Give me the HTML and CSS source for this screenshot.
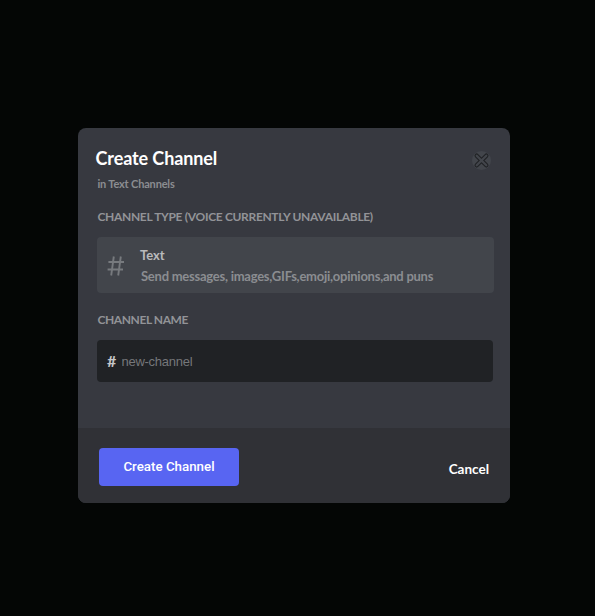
FILE: index.html
```html
<!DOCTYPE html>
<html lang="en">
<head>
<meta charset="utf-8">
<title>Create Channel</title>
<link rel="stylesheet" href="styles.css">
</head>
<body>
<main class="modal">
  <div class="content">
    <header class="header">
      <div>
        <h1 class="title">Create Channel</h1>
        <p class="subtitle">in Text Channels</p>
      </div>
      <button class="close" aria-label="Close">
        <svg width="19" height="19" viewBox="0 0 19 19" fill="none" stroke-linecap="round">
          <path d="M4.7 4.7 14.3 14.3M14.3 4.7 4.7 14.3" stroke="#202225" stroke-width="4.4"/>
          <path d="M4.7 4.7 14.3 14.3M14.3 4.7 4.7 14.3" stroke="#42454b" stroke-width="2.2"/>
        </svg>
      </button>
    </header>
    <h2 class="label type-label">CHANNEL TYPE (VOICE CURRENTLY UNAVAILABLE)</h2>
    <section class="option">
      <svg class="hash" width="18" height="20" viewBox="0 0 18 20" fill="none" stroke="#777a7e" stroke-width="1.9">
        <path d="M6.8.5 4.2 19.5M13.8.5 11.2 19.5M1.4 6H17M.6 13.5H16"/>
      </svg>
      <div>
        <h3 class="option-title">Text</h3>
        <p class="option-text">Send messages, images,GIFs,emoji,opinions,and puns</p>
      </div>
    </section>
    <h2 class="label name-label">CHANNEL NAME</h2>
    <label class="field">
      <span class="field-hash">#</span>
      <input class="input" type="text" placeholder="new-channel" aria-label="Channel name">
    </label>
  </div>
  <footer class="footer">
    <button class="create">Create Channel</button>
    <button class="cancel">Cancel</button>
  </footer>
</main>
</body>
</html>
```
FILE: styles.css
```css
* { box-sizing: border-box; }
body {
  margin: 0;
  min-height: 616px;
  padding: 128px 85px 0 78px;
  background: #040605;
  font-family: Lato, sans-serif;
}
h1, h2, h3, p { margin: 0; white-space: nowrap; }
button { border: 0; padding: 0; }
.modal {
  width: 432px;
  height: 375px;
  border-radius: 8px;
  overflow: hidden;
  background: #373940;
}
.content { height: 300px; padding: 18px 17px 0 19px; }
.header { display: flex; justify-content: space-between; height: 62px; }
.title {
  margin-left: -1.5px;
  font-size: 18px;
  line-height: 24px;
  font-weight: 700;
  letter-spacing: -0.1px;
  color: #fff;
}
.subtitle {
  margin: 6px 0 0 0.5px;
  font-size: 11px;
  line-height: 16px;
  font-weight: 700;
  letter-spacing: -0.17px;
  color: #8b8d91;
}
.close {
  width: 19px;
  height: 19px;
  margin: 5px 2px 0 0;
  border-radius: 50%;
  background: #42454b;
}
.close svg { display: block; }
.label {
  margin-left: 0.5px;
  font-size: 12px;
  line-height: 16px;
  font-weight: 700;
  letter-spacing: -0.33px;
  color: #929397;
}
.type-label { padding-top: 1px; margin-bottom: 12px; }
.option {
  display: flex;
  width: 397px;
  height: 56px;
  padding-left: 10px;
  border-radius: 4px;
  background: #42454b;
}
.hash { margin: 19px 15px 0 0; }
.option-title {
  margin-top: 9px;
  font-size: 13px;
  line-height: 18px;
  color: #b9babc;
}
.option-text {
  margin: 3px 0 0 1px;
  font-size: 13px;
  line-height: 18px;
  font-weight: 700;
  letter-spacing: -0.25px;
  color: #8b8d91;
}
.name-label { margin: 19px 0 12px 0.5px; letter-spacing: -0.42px; }
.field {
  display: flex;
  align-items: center;
  width: 396px;
  height: 42px;
  padding-left: 10px;
  border-radius: 4px;
  background: #202225;
}
.field-hash {
  width: 14.5px;
  margin-top: -2px;
  font-size: 16px;
  font-weight: 700;
  color: #c5c6c8;
}
.input {
  flex: 1;
  padding: 2px 0 0;
  border: 0;
  outline: 0;
  background: transparent;
  font: 13px/18px "Liberation Sans", Arial, sans-serif;
  letter-spacing: -0.27px;
  color: #ddd;
}
.input::placeholder { color: #75777a; }
.footer {
  display: flex;
  justify-content: space-between;
  height: 75px;
  padding: 20px 21px 0 21px;
  background: #303136;
}
.create {
  width: 140px;
  height: 38px;
  border-radius: 4px;
  background: #5865f2;
  font: 500 13.33px/18px Roboto, sans-serif;
  color: #fff;
}
.cancel {
  height: 42px;
  background: transparent;
  font: 700 13.5px/18px Lato, sans-serif;
  color: #fff;
}
```
